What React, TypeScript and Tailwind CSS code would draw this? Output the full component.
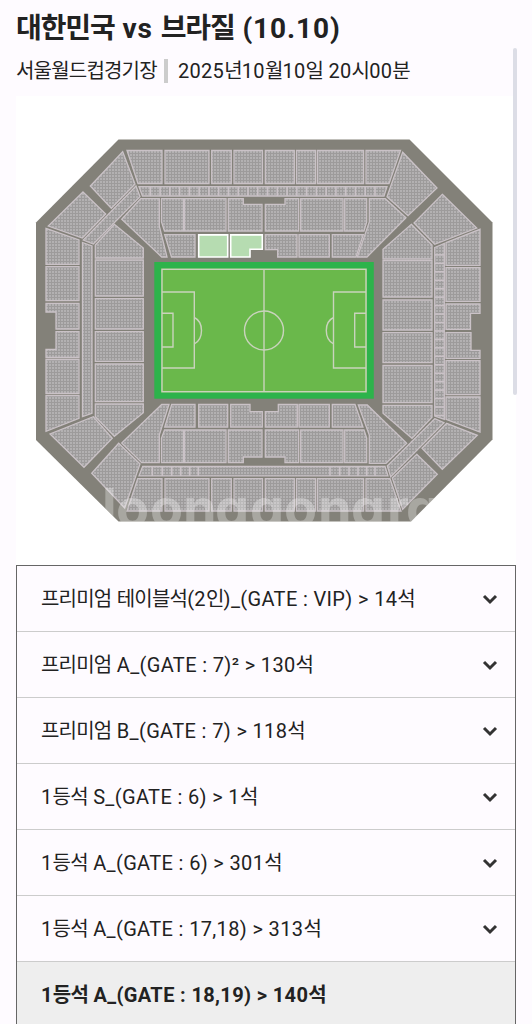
import { ReactNode } from "react";
import { clsx } from "clsx";

type Seat = {
  label: string;
  open?: boolean;
};

const SEATS: Seat[] = [
  { label: "프리미엄 테이블석(2인)_(GATE : VIP) > 14석" },
  { label: "프리미엄 A_(GATE : 7)² > 130석" },
  { label: "프리미엄 B_(GATE : 7) > 118석" },
  { label: "1등석 S_(GATE : 6) > 1석" },
  { label: "1등석 A_(GATE : 6) > 301석" },
  { label: "1등석 A_(GATE : 17,18) > 313석" },
  { label: "1등석 A_(GATE : 18,19) > 140석", open: true },
];

// Stadium blocks, as polygon points
const TOP = [
  "127,150.5 162,150.5 162,183.5 138,183.5",
  "165,150.5 209,150.5 209,183.5 165,183.5",
  "211.7,150.5 231.3,150.5 231.3,183.5 211.7,183.5",
  "234,150.5 262.5,150.5 262.5,183.5 234,183.5",
  "265.3,150.5 294.3,150.5 294.3,183.5 265.3,183.5",
  "296.5,150.5 315.6,150.5 315.6,183.5 296.5,183.5",
  "317.5,150.5 363.6,150.5 363.6,183.5 317.5,183.5",
  "366,150.5 400.5,150.5 389,183.5 366,183.5",
  "139,186.7 387,186.7 384,196 142.5,196",
  "140.7,198.7 159.3,198.7 159.3,226 167,257 161.7,257 121.7,219.3",
  "161.5,198.7 183.5,198.7 183.5,231 164.5,231 161.5,222",
  "184.5,198.7 226,198.7 226,231 184.5,231",
  "228.3,198.7 243.3,198.7 243.3,204.3 262,204.3 262,231 228.3,231",
  "265.3,204.3 285,204.3 285,198.7 298.7,198.7 298.7,231 265.3,231",
  "300.7,198.7 343,198.7 343,231 300.7,231",
  "344.7,198.7 366.7,198.7 366.7,222 364,231 344.7,231",
  "369.3,198.7 385.3,198.7 406,217.7 367,257 357.3,257 369.3,222",
  "164.7,234.7 195,234.7 195,257 171.5,257",
  "265.3,234.7 297,234.7 297,257 277.7,257 277.7,249.7 265.3,249.7",
  "299,234.7 329.3,234.7 329.3,257 299,257",
  "332.3,234.7 363.3,234.7 356,257 332.3,257",
];

const BOTTOM = [
  "171.7,404.5 195,404.5 195,427 164.7,427",
  "198.7,404.5 227.7,404.5 227.7,427 198.7,427",
  "230.7,404.5 250,404.5 250,411.7 262.3,411.7 262.3,427 230.7,427",
  "265.3,411.7 278.3,411.7 278.3,404.5 297.3,404.5 297.3,427 265.3,427",
  "299,404.5 329.3,404.5 329.3,427 299,427",
  "332.3,404.5 355,404.5 363,427 332.3,427",
  "164.5,430 183.5,430 183.5,462.7 161.5,462.7 161.5,438",
  "184.5,430 226,430 226,462.7 184.5,462.7",
  "228.3,430 262,430 262,457 243.3,457 243.3,462.7 228.3,462.7",
  "265.3,430 298.7,430 298.7,462.7 285,462.7 285,457 265.3,457",
  "300.7,430 343,430 343,462.7 300.7,462.7",
  "344.7,430 364,430 366.7,438 366.7,462.7 344.7,462.7",
  "161.7,404.5 169,404.5 159.3,435 159.3,462.7 141.7,462.7 121.7,443",
  "358.3,405 367.3,405 406.7,443.3 386,463.3 369.3,463.3 369.3,435",
  "142.7,466.5 385,466.5 388,475.8 139,475.8",
  "137.7,478.7 162,478.7 162,511 127,511",
  "165,478.7 209,478.7 209,511 165,511",
  "211.7,478.7 231.3,478.7 231.3,511 211.7,511",
  "234,478.7 262.5,478.7 262.5,511 234,511",
  "265.3,478.7 294.3,478.7 294.3,511 265.3,511",
  "296.5,478.7 315.6,478.7 315.6,511 296.5,511",
  "317.5,478.7 363.6,478.7 363.6,511 317.5,511",
  "366,478.7 390,478.7 401,511 366,511",
];

const LEFT = [
  "122.7,151.7 135,184 111.3,208.3 90.3,186",
  "83,192 105.7,214 82.3,238 48.3,226",
  "136,186 140,196.7 93.3,244 83.3,240",
  "114.3,224.3 143.3,248 143.3,258 95.3,258 95.3,245",
  "46,228.3 79,240 79,264.3 46,264.3",
  "46,266.7 79,266.7 79,300.7 46,300.7",
  "46,303.3 79,303.3 79,329 56,329 56,312 46,312",
  "56,331.7 79,331.7 79,357.5 46,357.5 46,349.5 56,349.5",
  "46,359.5 79,359.5 79,393.5 46,393.5",
  "46,395.7 79,395.7 79,418.3 46,431.3",
  "82.5,242.5 92,246 92,413.3 82.5,416.7",
  "95.3,260 143.3,260 143.3,296 95.3,296",
  "95.3,298.7 143.3,298.7 143.3,329 95.3,329",
  "95.3,331.7 143.3,331.7 143.3,361.3 95.3,361.3",
  "95.3,364 143.3,364 143.3,401.7 95.3,401.7",
  "95.3,404 143.3,404 143.3,412.7 114.3,436.3 95.3,416.7",
  "93.3,416.7 112.3,438.3 84,467.3 50,434",
  "118.7,443.3 140,464 124.7,508 91.7,473.3",
];

const RIGHT = [
  "402.7,152.3 437,188 408,215.7 387,196.7",
  "442.3,194.3 476.7,228 434.7,244.3 414,223",
  "411.3,224.3 432,245 432,259 383,259 383,249.3",
  "446,242.7 480,229.3 480,265.3 446,265.3",
  "446,267.7 480,267.7 480,301.3 446,301.3",
  "446,304 480,304 480,313.3 470.5,313.3 470.5,329.3 446,329.3",
  "446,332.7 471,332.7 471,350.3 480,350.3 480,358.3 446,358.3",
  "446,360.7 480,360.7 480,394.7 446,394.7",
  "446,397 480,397 480,432 446,419.3",
  "434.7,247.5 444.3,243.5 444.3,419.3 434.7,416",
  "383,260.7 432,260.7 432,297 383,297",
  "383,300 432,300 432,330 383,330",
  "383,332.7 432,332.7 432,362.7 383,362.7",
  "383,365.5 432,365.5 432,402.7 383,402.7",
  "383,405.3 432,405.3 432,417.3 412,438.3 383,413.3",
  "434.7,418.7 444,422.7 390.7,476.7 387.3,466",
  "446.7,423.3 477.3,435.3 442.3,469.3 422,448.3",
  "416.7,454.3 437.3,474.3 402.7,509.3 392.3,478",
];

const AVAILABLE = [
  "198.7,234.9 227.7,234.9 227.7,257 198.7,257",
  "230.7,234.9 262.3,234.9 262.3,249.3 250,249.3 250,257 230.7,257",
];

// Dividers of the narrow box rows
const TOP_TICKS = Array.from({ length: 24 }, (_, i) => 150.3 + i * 9.77);
const RIGHT_TICKS = Array.from({ length: 20 }, (_, i) => 254.9 + i * 8.45);
const BOTTOM_TICKS = [152.3, 162.3, 171.7, 180.7, 189.7, 198.3, 330, 339.7, 349, 358, 366.7, 375];

function StadiumMap() {
  return (
    <svg viewBox="16 96 500 469" className="block h-[469px] w-full bg-white" role="img" aria-label="좌석 배치도">
      <defs>
        <pattern id="seats" width="3" height="3" patternUnits="userSpaceOnUse">
          <rect width="3" height="3" fill="#b3b1b2" />
          <path d="M0 .5H3M.5 0V3" stroke="#9d9b9b" strokeWidth="1" />
        </pattern>
        <clipPath id="bowl">
          <path d="M118.5 139.5H409.5L492.5 222.5V439.5L411 521.5H118.5L36 440V222.5Z" />
        </clipPath>
      </defs>
      <path d="M118.5 139.5H409.5L492.5 222.5V439.5L411 521.5H118.5L36 440V222.5Z" fill="#838179" />
      <g fill="url(#seats)" stroke="#cac2c7" strokeWidth="1.3">
        {[...TOP, ...BOTTOM, ...LEFT, ...RIGHT].map((points) => (
          <polygon key={points} points={points} />
        ))}
      </g>
      <g stroke="#cac2c7" strokeWidth="1.6">
        {TOP_TICKS.map((x) => (
          <path key={x} d={`M${x} 187V196`} />
        ))}
        {BOTTOM_TICKS.map((x) => (
          <path key={x} d={`M${x} 467V476`} />
        ))}
        {RIGHT_TICKS.map((y) => (
          <path key={y} d={`M435 ${y}H444`} />
        ))}
      </g>
      <g fill="#b6dcb1" stroke="#fff" strokeWidth="1.6">
        {AVAILABLE.map((points) => (
          <polygon key={points} points={points} />
        ))}
      </g>

      <rect x="154.3" y="262" width="219.5" height="136.7" fill="#2db34b" />
      <rect x="161" y="268.5" width="206" height="124" fill="#6ab84b" />
      <g fill="none" stroke="#c9d3bd" strokeWidth="1.4">
        <rect x="162" y="269.3" width="204" height="122.4" />
        <path d="M264 269V392" />
        <circle cx="264" cy="330.5" r="19.5" />
        <path d="M162 292H194.3V368H162M162 313.3H173V347H162M194.3 317.5Q201.5 321 201.5 330.5T194.3 344" />
        <path d="M366 292H333.5V368H366M366 313.3H354.7V347H366M333.5 317.5Q326.3 321 326.3 330.5T333.5 344" />
      </g>
      <text
        x="102 116 150 183 215 250 284 318 351 387 406"
        y="527"
        clipPath="url(#bowl)"
        fill="#fff"
        fillOpacity=".3"
        className="font-['Inter',sans-serif] text-[54px] font-bold [font-feature-settings:'cv11']"
      >
        loonggonara
      </text>
    </svg>
  );
}

// Hangul sits a little tighter than the latin glyphs around it
function MixedText({ children }: { children: string }): ReactNode {
  return children.split(/([가-힣]+)/).map((part, i) =>
    i % 2 ? (
      <span key={i} className="tracking-[-0.04em]">
        {part}
      </span>
    ) : (
      part
    ),
  );
}

function Chevron() {
  return (
    <svg viewBox="0 0 16 12" className="h-3 w-4 shrink-0" fill="none" stroke="#333" strokeWidth="3">
      <path d="M2 3L8 9L14 3" />
    </svg>
  );
}

export default function App() {
  return (
    <div className="flex h-[1024px] w-[532px] overflow-hidden bg-[#fefbff] font-['Roboto','Noto_Sans_CJK_KR',sans-serif] text-[#222]">
      <main className="ml-4 w-[500px] shrink-0">
        <header className="h-24 pt-[9px]">
          <h1 className="text-[28px] leading-10 font-bold tracking-[0.032em] whitespace-nowrap">
            <MixedText>대한민국 vs 브라질 (10.10)</MixedText>
          </h1>
          <div className="mt-2 flex h-7 items-center text-xl leading-7 tracking-[0.015em] whitespace-nowrap">
            <span className="w-[148px]">
              <MixedText>서울월드컵경기장</MixedText>
            </span>
            <span className="h-6 w-1 bg-[#ccc]" />
            <span className="ml-2.5">
              <MixedText>2025년10월10일 20시00분</MixedText>
            </span>
          </div>
        </header>

        <StadiumMap />

        <ul className="border border-[#666]">
          {SEATS.map((seat) => (
            <li
              key={seat.label}
              className={clsx(
                "flex h-[66px] items-center justify-between border-b border-[#ccc] pr-[17px] pl-6 text-xl tracking-[0.018em] whitespace-nowrap",
                seat.open && "bg-[#eee] font-bold",
              )}
            >
              <span>
                <MixedText>{seat.label}</MixedText>
              </span>
              {!seat.open && <Chevron />}
            </li>
          ))}
        </ul>
      </main>
      <div className="mt-12 -ml-[3px] h-[347px] w-1 shrink-0 rounded-full bg-[#dcdde6]" />
    </div>
  );
}
